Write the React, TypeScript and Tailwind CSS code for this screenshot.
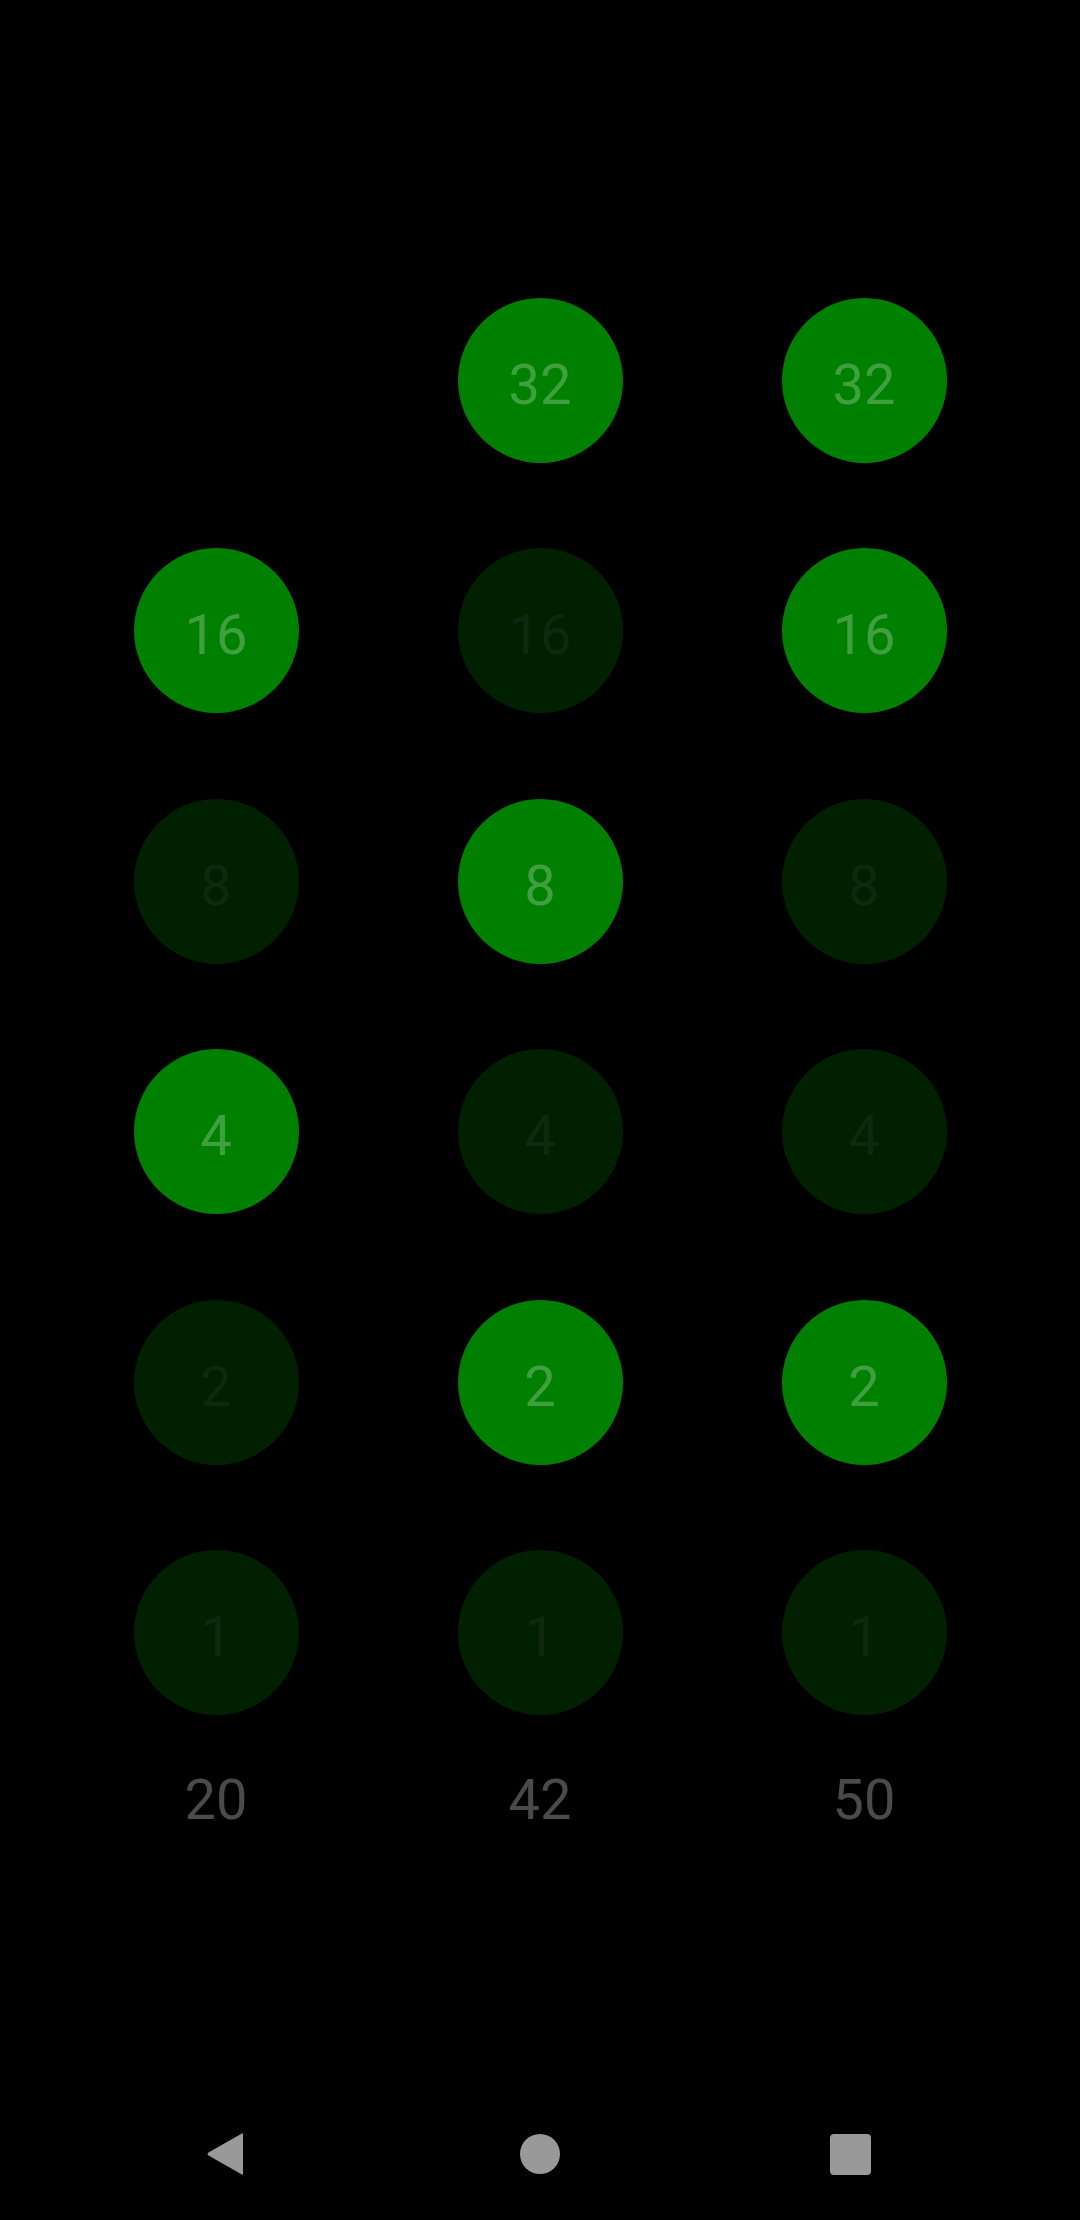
import React from 'react'

const bits = [32, 16, 8, 4, 2, 1]
const values = [20, 42, 50]

function Bit({ bit, value }: { bit: number; value: number }) {
  // a bit above the value's highest one isn't drawn at all
  if (bit > value) return <div className="w-[165px] h-[165px]" />
  const on = (value & bit) !== 0
  return (
    <div
      className={`w-[165px] h-[165px] rounded-full flex items-center justify-center text-[56px] leading-none ${
        on ? 'bg-[#008000] text-[#40a040]' : 'bg-[#002000] text-[#102810]'
      }`}
    >
      <span className="pt-[9px]">{bit}</span>
    </div>
  )
}

export default function App() {
  return (
    <div
      className="w-[1080px] h-[2220px] bg-black flex flex-col"
      style={{ fontFamily: 'Roboto, "Noto Sans", sans-serif' }}
    >
      {/* Bit grid */}
      <div className="pt-[298px] pl-[54px] flex flex-col gap-[85.4px]">
        {bits.map((bit) => (
          <div key={bit} className="grid grid-cols-[324px_324px_324px]">
            {values.map((v) => (
              <div key={v} className="flex justify-center">
                <Bit bit={bit} value={v} />
              </div>
            ))}
          </div>
        ))}
      </div>

      {/* Totals */}
      <div className="pl-[54px] pt-[53px] grid grid-cols-[324px_324px_324px]">
        {values.map((v) => (
          <div key={v} className="flex justify-center text-[56px] leading-[64px] text-[#4a4a4a]">
            {v}
          </div>
        ))}
      </div>

      {/* Navigation bar */}
      <div className="mt-auto h-[126px] flex items-center pb-[6px]">
        <svg className="ml-[205px]" width="42" height="44" viewBox="0 0 42 44">
          <path
            d="M38 2.5 L38 41.5 Q38 43.5 36 42 L3.5 23.5 Q1.5 22 3.5 20.5 L36 2 Q38 0.5 38 2.5 Z"
            fill="#999999"
          />
        </svg>
        <div className="ml-[273px] w-[40px] h-[40px] rounded-full bg-[#999999]" />
        <div className="ml-[270px] w-[41px] h-[41px] rounded-[4px] bg-[#999999]" />
      </div>
    </div>
  )
}
